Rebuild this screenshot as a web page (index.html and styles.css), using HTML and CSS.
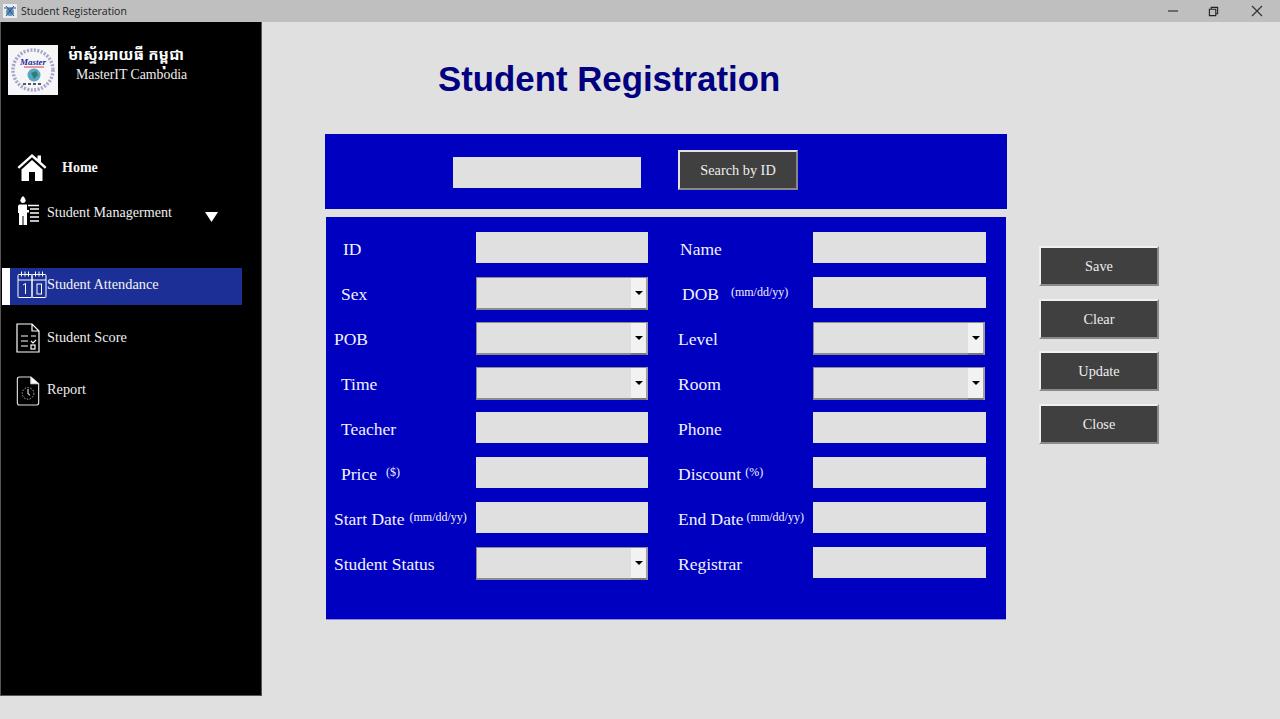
FILE: index.html
```html
<!DOCTYPE html>
<html lang="en">
<head>
<meta charset="utf-8">
<title>Student Registeration</title>
<link rel="stylesheet" href="styles.css">
</head>
<body>
<div class="window">
  <header class="titlebar">
    <div class="title-left">
      <svg class="app-icon" viewBox="0 0 16 16"><rect x="1" y="1" width="14" height="14" fill="#e8eef4"/><circle cx="8" cy="9" r="4" fill="#5f93b8"/><path d="M2 5h12M4 3l8 10M12 3L4 13" stroke="#37508a" stroke-width="1" fill="none"/></svg>
      <span>Student Registeration</span>
    </div>
    <div class="controls">
      <svg class="ctl ctl-min" viewBox="0 0 12 12"><path d="M1 6h10" stroke="#333" stroke-width="1.2"/></svg>
      <svg class="ctl ctl-max" viewBox="0 0 12 12"><path d="M1.5 3.5h7v7h-7zM3.5 3.5v-2h7v7h-2" stroke="#222" stroke-width="1.2" fill="none"/></svg>
      <svg class="ctl ctl-close" viewBox="0 0 12 12"><path d="M1 1l10 10M11 1L1 11" stroke="#333" stroke-width="1.2"/></svg>
    </div>
  </header>
  <div class="main">
    <aside class="sidebar">
      <div class="brand">
        <svg class="logo" viewBox="0 0 50 50">
          <rect width="50" height="50" fill="#f6f6f8"/>
          <circle cx="25" cy="25" r="20" fill="none" stroke="#a4a6c8" stroke-width="3.5" stroke-dasharray="2 1.5"/>
          <circle cx="26" cy="30" r="6.500" fill="#58a6c4"/>
          <path d="M23 28l5-2 2 4-4 4z" fill="#2f7f70"/>
          <text x="25" y="20" class="logo-text">Master</text>
          <path d="M16 22h20" stroke="#d04040" stroke-width="1"/>
          <path d="M15 39h20" stroke="#556" stroke-width="2" stroke-dasharray="3 2"/>
        </svg>
        <div class="brand-text">
          <div class="brand-km">ម៉ាស្ទ័រអាយធី កម្ពុជា</div>
          <div class="brand-en">MasterIT Cambodia</div>
        </div>
      </div>
      <nav class="nav">
        <a class="nav-item nav-home">
          <svg class="icon-home" viewBox="0 0 30 30"><path d="M15 2L0.5 15l1.6 1.8L15 5.2l12.900 11.600L29.500 15 24 10V3.500h-3.500V6.800z" fill="#fff"/><path d="M15 8L4.500 17.500V29H12V20h6v9h7.500V17.500z" fill="#fff"/></svg>
          <span class="nav-bold">Home</span>
        </a>
        <a class="nav-item nav-mgmt">
          <svg class="icon-person" viewBox="0 0 21 30"><path d="M5 0c1.800 2 2.600 3.200 2.600 4.300a2.600 2.600 0 0 1-5.200 0C2.400 3.200 3.200 2 5 0z" fill="#fff"/><path d="M1 8.500h8V14h2v2.500H9V29H5.500V20H4.500v9H1V17H0V10z" fill="#fff"/><path d="M10 9.500h11M12 13h9M12 17h9M12 21h9M12 25h9" stroke="#fff" stroke-width="1.400"/></svg>
          <span class="mgmt-text">Student Managerment</span>
          <svg class="caret" viewBox="0 0 13 10"><path d="M0 0h13L6.500 10z" fill="#fff"/></svg>
        </a>
        <a class="nav-item nav-active">
          <span class="active-bar"></span>
          <svg class="icon-cal" viewBox="0 0 30 28" fill="none" stroke="#fff" stroke-width="1"><rect x="1" y="4.500" width="14" height="23" rx="1"/><rect x="15" y="4.500" width="14" height="23" rx="1"/><path d="M1 10h28M4.500 1.500v5M8 1.500v5M11.500 1.500v5M18.500 1.500v5M22 1.500v5M25.500 1.500v5"/><path d="M6 15l2.500-1.500V24"/><rect x="20" y="14" width="4.500" height="10"/></svg>
          <span>Student Attendance</span>
        </a>
        <a class="nav-item nav-score">
          <svg class="icon-doc" viewBox="0 0 24 30" fill="none" stroke="#fff" stroke-width="1.200"><path d="M1 1h15l7 7v21H1zM16 1v7h7"/><path d="M5 13h7M5 18h7M5 23h7M15 13h5M15 18l2 2 3-3"/><rect x="15" y="22" width="4" height="4"/></svg>
          <span class="score-text">Student Score</span>
        </a>
        <a class="nav-item nav-report">
          <svg class="icon-doc" viewBox="0 0 24 31" fill="none" stroke="#ddd" stroke-width="1.200"><path d="M3 1h12l8 7v20a2 2 0 0 1-2 2H3a2 2 0 0 1-2-2V3a2 2 0 0 1 2-2z"/><path d="M15 1v7h8" fill="#fff"/><circle cx="12" cy="18" r="6" stroke-width="0.800" stroke-dasharray="1.500 1.500"/><path d="M12 13.500V18l2 2"/></svg>
          <span class="report-text">Report</span>
        </a>
      </nav>
    </aside>
    <main class="content">
      <section class="workspace">
        <h1 class="page-title">Student Registration</h1>
        <div class="search-panel">
          <input class="field search-field" type="text" aria-label="Search ID">
          <button class="btn btn-search" type="button">Search by ID</button>
        </div>
        <form class="form-panel">
          <label class="lbl in-9">ID</label>
          <input class="field" type="text">
          <label class="lbl in-r2">Name</label>
          <input class="field" type="text">

          <label class="lbl in-7">Sex</label>
          <div class="combo"><span class="combo-btn"></span></div>
          <label class="lbl in-r4">DOB<small class="hint hint-dob">(mm/dd/yy)</small></label>
          <input class="field" type="text">

          <label class="lbl">POB</label>
          <div class="combo"><span class="combo-btn"></span></div>
          <label class="lbl">Level</label>
          <div class="combo"><span class="combo-btn"></span></div>

          <label class="lbl in-7">Time</label>
          <div class="combo"><span class="combo-btn"></span></div>
          <label class="lbl">Room</label>
          <div class="combo"><span class="combo-btn"></span></div>

          <label class="lbl in-7">Teacher</label>
          <input class="field" type="text">
          <label class="lbl">Phone</label>
          <input class="field" type="text">

          <label class="lbl in-7">Price<small class="hint hint-price">($)</small></label>
          <input class="field" type="text">
          <label class="lbl">Discount<small class="hint hint-pct">(%)</small></label>
          <input class="field" type="text">

          <label class="lbl">Start Date<small class="hint hint-start">(mm/dd/yy)</small></label>
          <input class="field" type="text">
          <label class="lbl">End Date<small class="hint hint-end">(mm/dd/yy)</small></label>
          <input class="field" type="text">

          <label class="lbl">Student Status</label>
          <div class="combo"><span class="combo-btn"></span></div>
          <label class="lbl">Registrar</label>
          <input class="field" type="text">
        </form>
      </section>
      <div class="actions">
        <button class="btn btn-action" type="button">Save</button>
        <button class="btn btn-action" type="button">Clear</button>
        <button class="btn btn-action" type="button">Update</button>
        <button class="btn btn-action" type="button">Close</button>
      </div>
    </main>
  </div>
</div>
</body>
</html>
```
FILE: styles.css
```css
* { box-sizing: border-box; }
html, body { margin: 0; height: 100%; overflow: hidden; }
body { background: #e0e0e0; font-family: "Liberation Serif", "Times New Roman", serif; color: #fff; }
.window { width: 1280px; height: 719px; display: flex; flex-direction: column; }

.titlebar { height: 22px; background: #bfbfbf; display: flex; justify-content: space-between; align-items: center; color: #222; font: 10.500px "Open Sans", "Noto Sans", sans-serif; }
.title-left { display: flex; align-items: center; gap: 3px; padding-left: 2px; }
.app-icon { width: 16px; height: 16px; }
.controls { display: flex; align-items: center; }
.ctl { width: 12px; height: 12px; }
.ctl-min { margin-right: 29px; }
.ctl-max { margin-right: 32px; width: 11px; height: 11px; }
.ctl-close { margin-right: 17px; }

.main { display: flex; align-items: flex-start; }
.sidebar { width: 262px; height: 674px; background: #000; border: 1px solid #555; border-top: 0; padding-top: 23px; flex: none; }
.brand { display: flex; padding-left: 7px; height: 51px; }
.logo { width: 50px; height: 50px; flex: none; }
.logo-text { font: italic bold 9px "Liberation Serif", serif; fill: #1a2a9c; text-anchor: middle; }
.brand-text { margin-left: 10px; }
.brand-km { font: bold 15.300px/20px "Noto Sans Khmer", "Khmer OS", "DejaVu Sans", sans-serif; white-space: nowrap; margin-top: -1px; }
.brand-en { font-size: 13.800px; line-height: 20px; padding-left: 8px; color: #eee; margin-top: 1px; }

.nav { display: flex; flex-direction: column; margin-top: 56px; font-size: 14.300px; color: #eee; }
.nav-item { display: flex; align-items: center; position: relative; }
.nav-home { height: 30px; padding-left: 16px; gap: 15px; margin-bottom: 14px; }
.nav-bold { font-weight: bold; font-size: 14px; color: #f4f4f4; margin-top: 2px; }
.icon-home { width: 30px; height: 30px; flex: none; }
.nav-mgmt { height: 30px; padding-left: 17px; margin-bottom: 42px; }
.mgmt-text { margin-top: 3px; font-size: 14.100px; }
.icon-person { width: 21px; height: 30px; margin-right: 8px; flex: none; }
.caret { width: 13px; height: 10px; margin-left: 33px; margin-top: 12px; }
.nav-active { width: 240px; height: 37px; margin-left: 1px; background: #1c2f96; padding: 0 0 4px 15px; margin-bottom: 17px; color: #f4f4f4; }
.active-bar { position: absolute; left: 0; top: 0; bottom: 0; width: 8px; background: #fff; }
.icon-cal { width: 30px; height: 28px; flex: none; margin-top: -1px; }
.nav-score { height: 32px; padding-left: 15px; gap: 7px; margin-bottom: 21px; }
.score-text { margin-top: -2px; }
.nav-report { height: 31px; padding: 0 0 0 15px; gap: 7px; }
.report-text { margin-top: -2px; }
.icon-doc { width: 24px; height: 30px; flex: none; }

.content { flex: 1; display: flex; padding-left: 63px; }
.workspace { width: 682px; flex: none; }
.page-title { margin: 37px 0 0 113px; height: 75px; font: bold 34.800px/40px "Liberation Sans", Arial, sans-serif; color: #000080; white-space: nowrap; }

.field { display: block; border: 0; background: #e0e0e0; height: 31px; width: 100%; padding: 0; border-radius: 0; }
.search-panel { height: 75px; background: #0000c0; display: flex; align-items: flex-start; padding: 16px 0 0 128px; }
.search-field { width: 188px; margin-top: 7px; }
.btn { font-family: "Liberation Serif", serif; font-size: 14.300px; color: #eee; background: #404040; padding: 0; border-radius: 0; }
.btn-search { width: 120px; height: 40px; margin-left: 37px; border: 2px solid; border-color: #e4e4e4 #888 #888 #e4e4e4; padding-top: 1px; }

.form-panel { width: 680px; height: 403px; margin: 8px 0 0 1px; background: #0000c0; border-bottom: 1px solid #8a8ae0; padding: 15px 20px 0 8px; display: grid; grid-template-columns: 142px 172px 165px 173px; column-gap: 0; grid-auto-rows: 45px; align-items: start; }
.lbl { font-size: 17.500px; line-height: 34px; color: #f2f2ff; white-space: nowrap; }
.lbl:nth-child(4n+3) { padding-left: 30px; }
.in-7 { padding-left: 7px; }
.in-9 { padding-left: 9px; }
.lbl.in-r2 { padding-left: 32px; }
.lbl.in-r4 { padding-left: 34px; }
.hint { font-size: 12px; position: relative; top: -4px; }
.hint-dob { margin-left: 12px; }
.hint-price { margin-left: 9px; }
.hint-pct { margin-left: 4px; }
.hint-start { margin-left: 5px; }
.hint-end { margin-left: 3px; }

.combo { height: 33px; width: 172px; background: #e0e0e0; border: solid; border-width: 1.500px 2px 2px 1.500px; border-color: #8c8c8c #a0a0a0 #8c8c8c #8c8c8c; display: flex; justify-content: flex-end; }
.combo-btn { width: 15px; background: #f2f2f2; position: relative; margin-bottom: -2px; border-bottom: 2px solid #777; }
.combo-btn::after { content: ""; position: absolute; left: 4px; top: 13px; border: 4px solid transparent; border-top-color: #000; border-bottom: 0; }

.actions { display: flex; flex-direction: column; gap: 12.500px; margin: 224px 0 0 32px; }
.btn-action { width: 120px; height: 40px; border: 2px solid; border-color: #f0f0f0 #8a8a8a #8a8a8a #f0f0f0; padding-top: 1px; }
```
